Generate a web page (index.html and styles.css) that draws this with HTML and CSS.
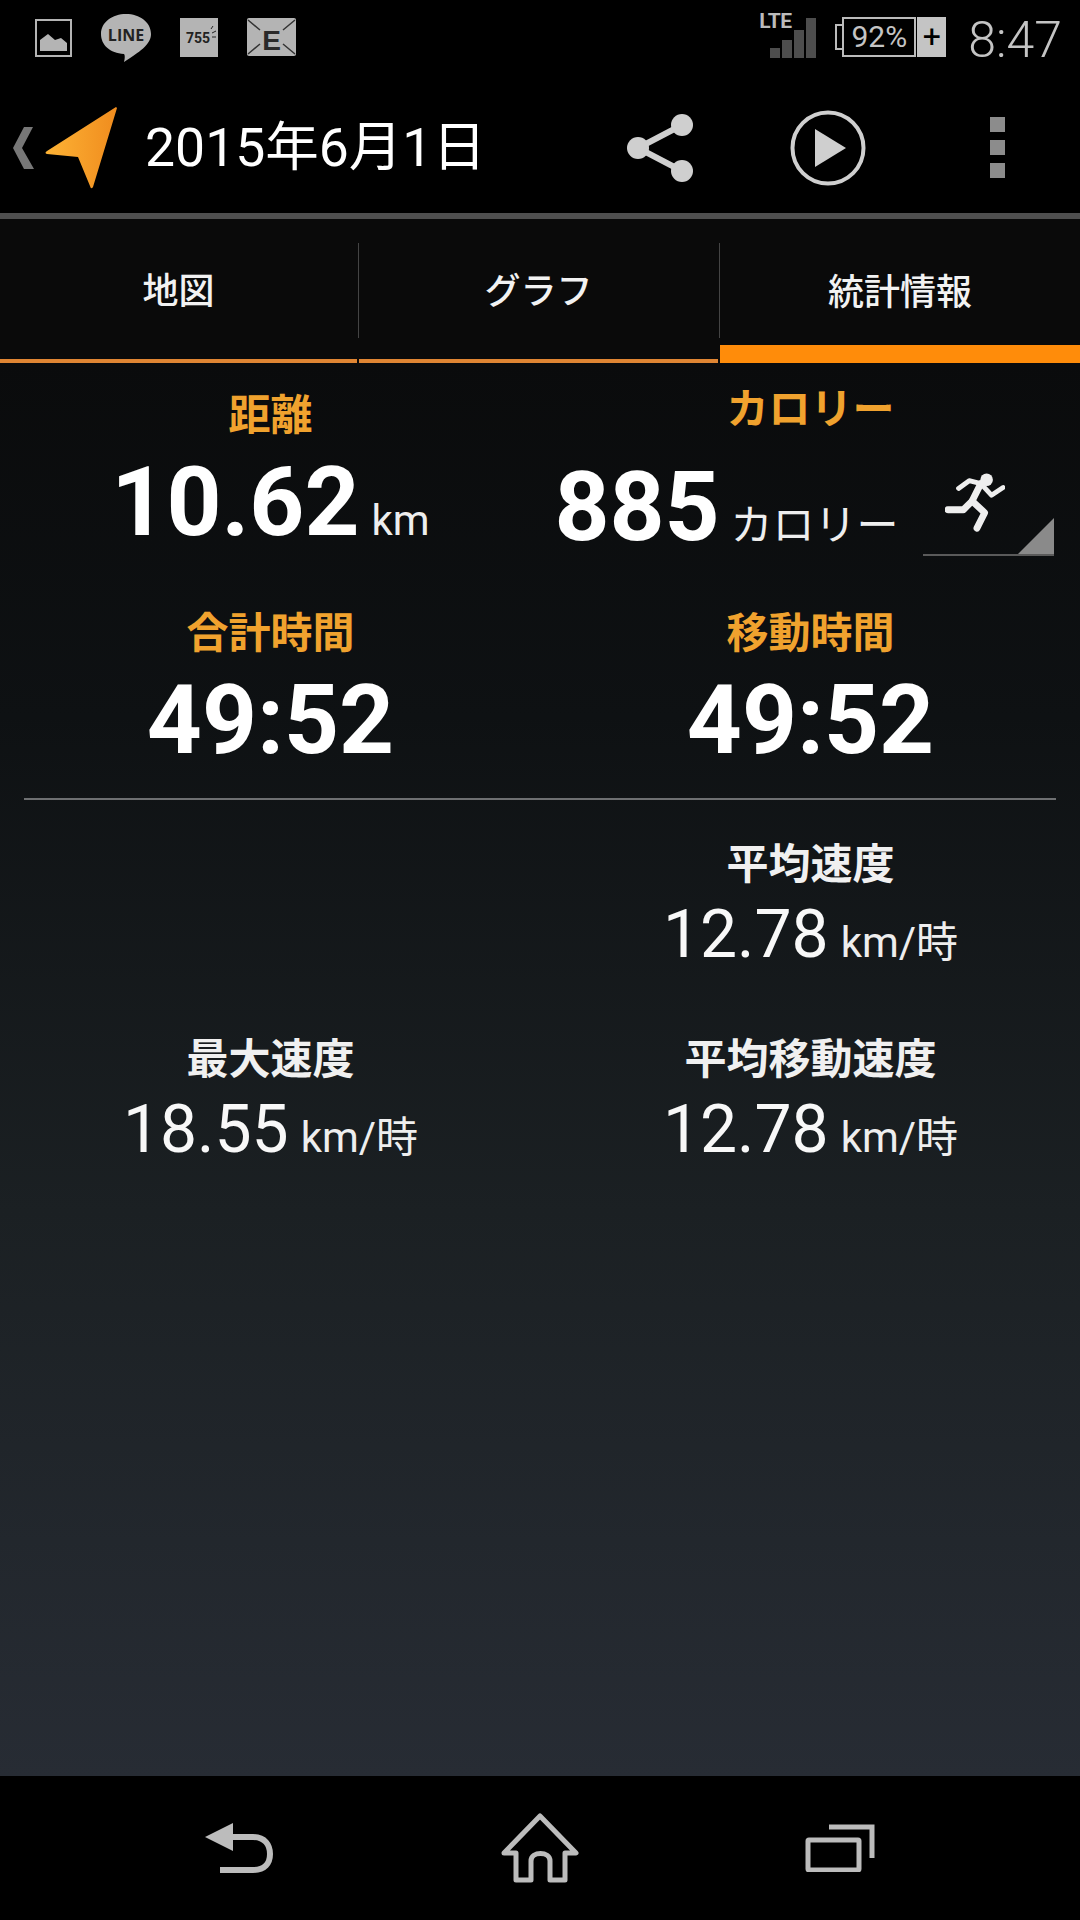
FILE: index.html
```html
<!DOCTYPE html>
<html lang="ja">
<head>
    <meta charset="UTF-8">
    <meta name="viewport" content="width=device-width, initial-scale=1.0">
    <title>統計情報</title>
    <link rel="stylesheet" href="styles.css">
</head>
<body>
    <div class="status-bar">
        <div class="notify-icons">
            <svg class="icon-picture" width="37" height="38" viewBox="0 0 37 38">
                <rect x="1" y="1" width="35" height="36" fill="none" stroke="#b4b4b4" stroke-width="2"/>
                <path d="M5 32V21L13 15L20 21L26 19L32 24V32Z" fill="#b4b4b4"/>
            </svg>
            <svg class="icon-line" width="50" height="49" viewBox="0 0 50 49">
                <path d="M25 0C38.500 0 50 8 50 20C50 31 38 38 23 48C24 44 24 41 23 40C9 39 0 31 0 20C0 8 11.500 0 25 0Z" fill="#b4b4b4"/>
                <text x="25" y="27" class="line-text" text-anchor="middle">LINE</text>
            </svg>
            <svg class="icon-square" width="38" height="39" viewBox="0 0 38 39">
                <rect width="38" height="39" fill="#b4b4b4"/>
                <text x="6" y="25" class="square-text">755</text>
                <path d="M31 11L33 8M32 15L36 13M32 19H36" stroke="#222" stroke-width="1"/>
            </svg>
            <svg class="icon-mail" width="49" height="38" viewBox="0 0 49 38">
                <rect width="49" height="38" rx="2" fill="#b4b4b4"/>
                <path d="M1 2L13 12M48 2L36 12M1 36L13 26M48 36L36 26" stroke="#333" stroke-width="1.500"/>
                <text x="24.500" y="32" class="mail-text" text-anchor="middle">E</text>
            </svg>
        </div>
        <div class="system-icons">
            <div class="signal">
                <span class="lte">LTE</span>
                <div class="bars">
                    <i class="bar-1"></i><i class="bar-2"></i><i class="bar-3"></i><i class="bar-4"></i>
                </div>
            </div>
            <div class="battery">
                <div class="battery-cap"></div>
                <div class="battery-body">92%</div>
                <div class="battery-plus">+</div>
            </div>
            <div class="clock">8:47</div>
        </div>
    </div>

    <div class="action-bar">
        <svg class="back-arrow" width="22" height="42" viewBox="0 0 22 42">
            <path d="M20 0H11L0 21L11 42H21L9 21Z" fill="#777"/>
        </svg>
        <svg class="app-logo" width="74" height="82" viewBox="0 0 74 82">
            <defs>
                <linearGradient id="logo-grad" x1="0" y1="0" x2="1" y2="0">
                    <stop offset="0" stop-color="#fdb335"/>
                    <stop offset="1" stop-color="#f08c1e"/>
                </linearGradient>
            </defs>
            <path d="M73 1L49 80Q47 83 46 79L34 50L3 47Q0 46 3 44L72 0Z" fill="url(#logo-grad)"/>
        </svg>
        <div class="action-title">2015年6月1日</div>
        <div class="action-buttons">
            <svg width="66" height="70" viewBox="0 0 66 70">
                <path d="M55 12L11 35L55 58" fill="none" stroke="#cfcfcf" stroke-width="6"/>
                <circle cx="55" cy="12" r="11" fill="#cfcfcf"/>
                <circle cx="11" cy="35" r="11" fill="#cfcfcf"/>
                <circle cx="55" cy="58" r="11" fill="#cfcfcf"/>
            </svg>
            <svg width="76" height="76" viewBox="0 0 76 76">
                <circle cx="38" cy="38" r="35.500" fill="none" stroke="#cfcfcf" stroke-width="4"/>
                <path d="M25 19L56 38L25 57Z" fill="#cfcfcf"/>
            </svg>
            <div class="overflow-menu"><i></i><i></i><i></i></div>
        </div>
    </div>
    <div class="action-divider"></div>

    <div class="tabs">
        <div class="tab">地図</div>
        <div class="tab">グラフ</div>
        <div class="tab active">統計情報</div>
    </div>

    <div class="content">
        <div class="stats-top">
            <div class="stat">
                <div class="stat-label accent">距離</div>
                <div class="stat-big"><span class="big-num">10.62</span><span class="unit">km</span></div>
            </div>
            <div class="stat">
                <div class="stat-label accent label-calorie">カロリー</div>
                <div class="calorie-row">
                    <div class="stat-big"><span class="big-num">885</span><span class="unit unit-cal">カロリー</span></div>
                    <div class="activity-spinner">
                        <svg width="60" height="62" viewBox="0 0 62 62">
                            <circle cx="43" cy="8" r="6.500" fill="#eee"/>
                            <path d="M14 17L25 9L37 12L48 24L60 16" fill="none" stroke="#eee" stroke-width="5" stroke-linejoin="round" stroke-linecap="round"/>
                            <path d="M37 12L28 30L41 42L33 58" fill="none" stroke="#eee" stroke-width="7" stroke-linejoin="round" stroke-linecap="round"/>
                            <path d="M28 30L19 39H3" fill="none" stroke="#eee" stroke-width="7" stroke-linejoin="round" stroke-linecap="round"/>
                        </svg>
                    </div>
                </div>
            </div>
            <div class="stat">
                <div class="stat-label accent">合計時間</div>
                <div class="stat-big"><span class="big-num">49:52</span></div>
            </div>
            <div class="stat">
                <div class="stat-label accent">移動時間</div>
                <div class="stat-big"><span class="big-num">49:52</span></div>
            </div>
        </div>

        <div class="stats-divider"></div>

        <div class="stats-bottom">
            <div class="stat"></div>
            <div class="stat">
                <div class="stat-label">平均速度</div>
                <div class="stat-small"><span class="small-num">12.78</span><span class="unit">km/時</span></div>
            </div>
            <div class="stat">
                <div class="stat-label">最大速度</div>
                <div class="stat-small"><span class="small-num">18.55</span><span class="unit">km/時</span></div>
            </div>
            <div class="stat">
                <div class="stat-label">平均移動速度</div>
                <div class="stat-small"><span class="small-num">12.78</span><span class="unit">km/時</span></div>
            </div>
        </div>
    </div>

    <div class="nav-bar">
        <svg width="70" height="50" viewBox="0 0 70 50">
            <path d="M0 14L28 0V28Z" fill="#bcbcbc"/>
            <path d="M24 14H48C60 14 65 22 65 31C65 40 60 47 48 47H15" fill="none" stroke="#bcbcbc" stroke-width="6"/>
        </svg>
        <svg width="80" height="70" viewBox="0 0 80 70">
            <path d="M40 3L76 40H65V67H50V48C50 38 31 38 31 48V67H16V40H4Z" fill="none" stroke="#bcbcbc" stroke-width="5" stroke-linejoin="round"/>
        </svg>
        <svg width="70" height="48" viewBox="0 0 70 48">
            <path d="M24 3H67V34" fill="none" stroke="#bcbcbc" stroke-width="5"/>
            <rect x="3" y="16" width="51" height="30" rx="1" fill="none" stroke="#bcbcbc" stroke-width="5"/>
        </svg>
    </div>
</body>
</html>
```

FILE: styles.css
```css
* {
    margin: 0;
    padding: 0;
    box-sizing: border-box;
}

body {
    width: 1080px;
    height: 1920px;
    background: #000;
    color: #fff;
    font-family: Roboto, 'Noto Sans CJK JP', sans-serif;
    display: flex;
    flex-direction: column;
    overflow: hidden;
}

/* Status bar */
.status-bar {
    height: 72px;
    display: flex;
    justify-content: space-between;
    align-items: flex-start;
    padding: 12px 18px 0 35px;
}

.notify-icons {
    display: flex;
    align-items: flex-start;
    gap: 29px;
}

.icon-picture {
    margin-top: 7px;
}

.icon-line {
    margin-top: 2px;
}

.line-text {
    font-family: 'Open Sans', sans-serif;
    font-size: 16px;
    font-weight: 700;
    fill: #222;
}

.icon-square {
    margin-top: 6px;
}

.square-text {
    font-size: 14px;
    font-weight: 700;
    fill: #222;
}

.icon-mail {
    margin-top: 6px;
}

.mail-text {
    font-family: 'Liberation Sans', sans-serif;
    font-size: 28px;
    font-weight: 700;
    fill: #2a2a2a;
}

.system-icons {
    display: flex;
    align-items: flex-start;
}

.signal {
    flex: none;
    width: 58px;
    height: 48px;
    position: relative;
    margin-right: 18px;
}

.lte {
    position: absolute;
    left: 0;
    top: -1px;
    font-size: 21px;
    line-height: 20px;
    font-weight: 700;
    color: #bbb;
    letter-spacing: -0.5px;
}

.bars {
    position: absolute;
    left: 11px;
    top: 6px;
    display: flex;
    align-items: flex-end;
    gap: 2px;
    height: 40px;
}

.bars i {
    display: block;
    width: 10px;
    background: #4d4d4d;
}

.bar-1 { height: 10px; }
.bar-2 { height: 18px; }
.bar-3 { height: 28px; }
.bar-4 { height: 40px; }

.battery {
    flex: none;
    display: flex;
    align-items: center;
    height: 40px;
    margin-top: 5px;
    margin-right: 22px;
}

.battery-cap {
    flex: none;
    width: 7px;
    height: 26px;
    border: 2px solid #bbb;
    border-right: none;
}

.battery-body {
    flex: none;
    width: 74px;
    height: 40px;
    border: 2px solid #bbb;
    color: #c4c4c4;
    font-size: 30px;
    line-height: 36px;
    text-align: center;
}

.battery-plus {
    flex: none;
    width: 29px;
    height: 40px;
    margin-left: 1px;
    background: #c4c4c4;
    color: #000;
    font-size: 32px;
    line-height: 38px;
    text-align: center;
}

.clock {
    flex: none;
    font-size: 50px;
    line-height: 50px;
    color: #c4c4c4;
    font-weight: 300;
    margin-top: 3px;
}

/* Action bar */
.action-bar {
    height: 141px;
    display: flex;
    align-items: center;
    padding: 10px 0 0 13px;
}

.app-logo {
    margin-left: 9px;
}

.action-title {
    margin-left: 27px;
    margin-bottom: 10px;
    font-size: 53.5px;
    color: #fff;
}

.action-buttons {
    margin-left: auto;
    width: 453px;
    display: flex;
    align-items: center;
}

.action-buttons svg:nth-child(2) {
    margin-left: 97px;
}

.overflow-menu {
    margin-left: 124px;
    display: flex;
    flex-direction: column;
    gap: 8px;
}

.overflow-menu i {
    display: block;
    width: 15px;
    height: 15px;
    background: #8c8c8c;
}

.action-divider {
    height: 6px;
    background: #4f4f4f;
}

/* Tabs */
.tabs {
    height: 144px;
    background: #0a0a0a;
    display: grid;
    grid-template-columns: 359px 361px 360px;
}

.tab {
    display: flex;
    align-items: center;
    justify-content: center;
    padding-bottom: 2px;
    font-size: 36px;
    font-weight: 500;
    color: #f2f2f2;
    border-bottom: 4px solid #df8533;
    margin-right: 2px;
    position: relative;
}

.tab:not(.active)::after {
    content: "";
    position: absolute;
    right: -2px;
    top: 24px;
    width: 1px;
    height: 95px;
    background: #444;
}

.tab.active {
    border-bottom: 18px solid #ff8c0a;
    margin-right: 0;
    padding-bottom: 0;
    padding-top: 14px;
}

/* Stats */
.content {
    flex: 1;
    background: linear-gradient(#0a0b0c, #0e1113 25%, #1b2023 60%, #272c34);
}

.stats-top,
.stats-bottom {
    display: grid;
    grid-template-columns: 541px 539px;
}

.stats-top {
    height: 435px;
    padding-top: 23px;
    grid-template-rows: 218px 194px;
}

.stat {
    display: flex;
    flex-direction: column;
    align-items: center;
}

.stat-label {
    font-size: 42px;
    font-weight: 700;
    line-height: 60px;
    margin-bottom: 2px;
    color: #f0f0f0;
}

.stat-label.accent {
    color: #f0a22e;
    margin-bottom: 4px;
}

.stat-label.label-calorie {
    margin-top: -6px;
    margin-bottom: 15px;
}

.stat-big {
    display: flex;
    align-items: baseline;
    justify-content: center;
}

.big-num {
    font-size: 96px;
    font-weight: 700;
    line-height: 104px;
}

.stat-small {
    display: flex;
    align-items: baseline;
    justify-content: center;
}

.small-num {
    font-size: 66px;
    line-height: 76px;
    color: #f8f8f8;
}

.unit {
    margin-left: 12px;
    font-size: 42px;
    font-weight: 400;
    color: #eee;
}

.unit-cal {
    margin-left: 11px;
}

.calorie-row {
    display: flex;
    align-items: flex-end;
    padding-right: 13px;
    gap: 24px;
}

.activity-spinner {
    width: 131px;
    height: 85px;
    margin-bottom: 3px;
    border-bottom: 2px solid #5a5a5a;
    position: relative;
    padding-left: 22px;
}

.activity-spinner::after {
    content: "";
    position: absolute;
    right: 0;
    bottom: 0;
    border-style: solid;
    border-width: 0 0 36px 36px;
    border-color: transparent transparent #8a8a8a transparent;
}

.stats-divider {
    height: 2px;
    margin: 0 24px;
    background: #6e7072;
}

.stats-bottom {
    padding-top: 35px;
    grid-template-rows: 195px 195px;
}

/* Nav bar */
.nav-bar {
    height: 144px;
    background: #000;
    display: grid;
    grid-template-columns: repeat(3, 300px);
    justify-content: center;
    justify-items: center;
    align-items: center;
}
```
